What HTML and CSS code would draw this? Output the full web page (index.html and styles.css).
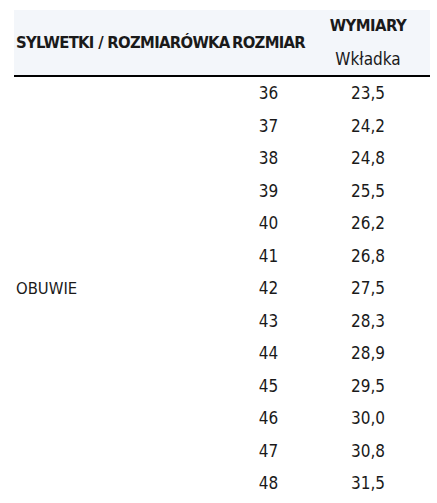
FILE: index.html
```html
<!DOCTYPE html>
<html lang="pl">
<head>
<meta charset="utf-8">
<link rel="stylesheet" href="styles.css">
</head>
<body>
<table class="sizes">
  <thead>
    <tr>
      <th class="col-name" rowspan="2">SYLWETKI / ROZMIARÓWKA</th>
      <th class="col-size" rowspan="2">ROZMIAR</th>
      <th class="col-dim">WYMIARY</th>
    </tr>
    <tr>
      <th class="col-dim sub">Wkładka</th>
    </tr>
  </thead>
  <tbody>
    <tr><td class="name" rowspan="13">OBUWIE</td><td>36</td><td>23,5</td></tr>
    <tr><td>37</td><td>24,2</td></tr>
    <tr><td>38</td><td>24,8</td></tr>
    <tr><td>39</td><td>25,5</td></tr>
    <tr><td>40</td><td>26,2</td></tr>
    <tr><td>41</td><td>26,8</td></tr>
    <tr><td>42</td><td>27,5</td></tr>
    <tr><td>43</td><td>28,3</td></tr>
    <tr><td>44</td><td>28,9</td></tr>
    <tr><td>45</td><td>29,5</td></tr>
    <tr><td>46</td><td>30,0</td></tr>
    <tr><td>47</td><td>30,8</td></tr>
    <tr><td>48</td><td>31,5</td></tr>
  </tbody>
</table>
</body>
</html>
```
FILE: styles.css
```css
html, body {
  margin: 0;
  background: #fff;
}
body {
  padding: 10px 7px 0 14px;
  font-family: "DejaVu Sans Condensed", "DejaVu Sans", sans-serif;
  color: #1a1a1a;
}
.sizes {
  width: 416px;
  border-collapse: collapse;
  table-layout: fixed;
}
.sizes thead th {
  background: #f3f6fa;
  font-weight: bold;
  font-size: 16.5px;
  letter-spacing: -0.7px;
  padding: 0;
  border-bottom: 2px solid #000;
  white-space: nowrap;
}
.sizes thead tr:first-child th.col-dim {
  border-bottom: none;
  height: 31px;
  letter-spacing: -0.5px;
}
.col-name {
  text-align: left;
  padding-left: 2px !important;
  width: 215px;
}
.col-size {
  width: 75px;
  text-align: center;
}
.col-dim {
  text-align: center;
  height: 32px;
}
.col-dim.sub {
  font-weight: normal !important;
  font-size: 17px !important;
  letter-spacing: 0 !important;
  padding-top: 2px !important;
}
.sizes tbody td {
  height: 32.5px;
  padding: 0;
  text-align: center;
  font-size: 17px;
}
.sizes tbody td.name {
  text-align: left;
  padding-left: 2px;
  font-size: 16.5px;
}
```
